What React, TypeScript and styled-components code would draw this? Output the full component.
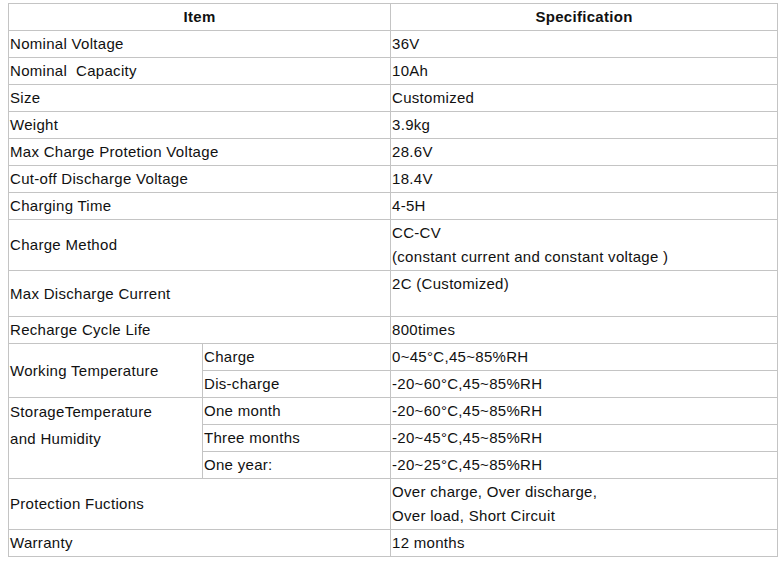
import React from "react";
import styled, { createGlobalStyle } from "styled-components";

const Global = createGlobalStyle`
  html, body { margin: 0; padding: 0; background: #ffffff; }
  body { padding: 3px 0 0 8px; }
`;

const Table = styled.table`
  border-collapse: separate;
  border-spacing: 0;
  table-layout: fixed;
  width: 770px;
  border-top: 1px solid #c4c4c4;
  border-left: 1px solid #c4c4c4;
  font-family: "Liberation Sans", Arial, sans-serif;
  font-size: 15px;
  letter-spacing: 0.3px;
  color: #111111;
`;

const Row = styled.tr<{ $h?: number }>`
  height: ${(p) => p.$h ?? 27}px;
`;

const Head = styled.th`
  box-sizing: border-box;
  border-right: 1px solid #c4c4c4;
  border-bottom: 1px solid #c4c4c4;
  padding: 1px 1px;
  line-height: 24px;
  font-weight: bold;
  text-align: center;
  vertical-align: middle;
`;

const Cell = styled.td<{ $top?: boolean; $lh?: number }>`
  box-sizing: border-box;
  border-right: 1px solid #c4c4c4;
  border-bottom: 1px solid #c4c4c4;
  padding: ${(p) => (p.$lh ? "0 1px" : "1px 1px")};
  line-height: ${(p) => p.$lh ?? 24}px;
  text-align: left;
  vertical-align: ${(p) => (p.$top ? "top" : "middle")};
  white-space: pre;
`;

type Simple = [string, string];

const topRows: Simple[] = [
  ["Nominal Voltage", "36V"],
  ["Nominal  Capacity", "10Ah"],
  ["Size", "Customized"],
  ["Weight", "3.9kg"],
  ["Max Charge Protetion Voltage", "28.6V"],
  ["Cut-off Discharge Voltage", "18.4V"],
  ["Charging Time", "4-5H"],
];

export default function App() {
  return (
    <>
      <Global />
      <Table>
        <colgroup>
          <col style={{ width: 194 }} />
          <col style={{ width: 188 }} />
          <col style={{ width: 387 }} />
        </colgroup>
        <tbody>
          <Row $h={27}>
            <Head colSpan={2}>Item</Head>
            <Head>Specification</Head>
          </Row>
          {topRows.map(([k, v]) => (
            <Row key={k}>
              <Cell colSpan={2}>{k}</Cell>
              <Cell $top>{v}</Cell>
            </Row>
          ))}
          <Row $h={51}>
            <Cell colSpan={2}>Charge Method</Cell>
            <Cell $top>
              CC-CV
              <br />
              (constant current and constant voltage )
            </Cell>
          </Row>
          <Row $h={46}>
            <Cell colSpan={2}>Max Discharge Current</Cell>
            <Cell $top>2C (Customized)</Cell>
          </Row>
          <Row $h={26}>
            <Cell colSpan={2}>Recharge Cycle Life</Cell>
            <Cell $top>800times</Cell>
          </Row>
          <Row>
            <Cell rowSpan={2}>Working Temperature</Cell>
            <Cell>Charge</Cell>
            <Cell $top>0~45°C,45~85%RH</Cell>
          </Row>
          <Row>
            <Cell>Dis-charge</Cell>
            <Cell $top>-20~60°C,45~85%RH</Cell>
          </Row>
          <Row>
            <Cell rowSpan={3} $top $lh={27}>
              StorageTemperature
              <br />
              and Humidity
            </Cell>
            <Cell>One month</Cell>
            <Cell $top>-20~60°C,45~85%RH</Cell>
          </Row>
          <Row>
            <Cell>Three months</Cell>
            <Cell $top>-20~45°C,45~85%RH</Cell>
          </Row>
          <Row>
            <Cell>One year:</Cell>
            <Cell $top>-20~25°C,45~85%RH</Cell>
          </Row>
          <Row $h={51}>
            <Cell colSpan={2}>Protection Fuctions</Cell>
            <Cell $top>
              Over charge, Over discharge,
              <br />
              Over load, Short Circuit
            </Cell>
          </Row>
          <Row>
            <Cell colSpan={2}>Warranty</Cell>
            <Cell $top>12 months</Cell>
          </Row>
        </tbody>
      </Table>
    </>
  );
}
